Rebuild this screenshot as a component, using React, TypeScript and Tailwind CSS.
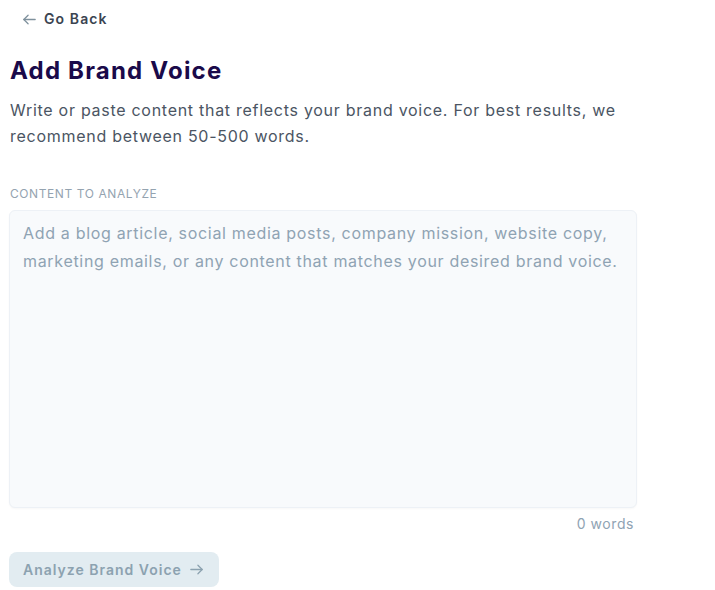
import React, {useState} from 'react';

const ArrowLeft: React.FC<{className?: string}> = ({className}) => (
  <svg viewBox="0 0 24 24" fill="none" stroke="currentColor" strokeWidth={1.8} strokeLinecap="round" strokeLinejoin="round" className={className}>
    <path d="M20 12H4" />
    <path d="M10 18l-6-6 6-6" />
  </svg>
);

const ArrowRight: React.FC<{className?: string}> = ({className}) => (
  <svg viewBox="0 0 24 24" fill="none" stroke="currentColor" strokeWidth={1.8} strokeLinecap="round" strokeLinejoin="round" className={className}>
    <path d="M4 12h16" />
    <path d="M14 6l6 6-6 6" />
  </svg>
);

const App: React.FC = () => {
  const [content, setContent] = useState('');
  const words = content.trim() ? content.trim().split(/\s+/).length : 0;

  return (
    <div className="min-h-screen bg-white font-['Inter',sans-serif] pl-[10px] pr-[77px] pt-[9px] pb-2">
      <button type="button" className="flex items-center gap-[6px] pl-[11px] text-[14px] font-semibold text-[#3b4451] leading-[20px] tracking-[1.1px]">
        <ArrowLeft className="w-[17px] h-[17px] text-[#7f919d]" />
        Go Back
      </button>

      <h1 className="mt-[26px] text-[24px] leading-[32px] font-bold text-[#1a0a4a] tracking-[1.2px]">Add Brand Voice</h1>
      <p className="mt-[10px] mr-[-40px] text-[16px] leading-[26px] text-[#4b5563] tracking-[0.72px]">
        Write or paste content that reflects your brand voice. For best results, we<br />recommend between 50-500 words.
      </p>

      <label className="block mt-[37px] text-[12px] leading-[16px] uppercase text-[#94a3b0] tracking-[0.58px]">Content to analyze</label>
      <textarea
        value={content}
        onChange={(e) => setContent(e.target.value)}
        placeholder="Add a blog article, social media posts, company mission, website copy, marketing emails, or any content that matches your desired brand voice."
        className="mt-[8px] block w-full h-[298px] -ml-px resize-none rounded-[6px] border border-[#edf1f6] bg-[#f8fafc] px-[13px] py-[8px] text-[16px] leading-[28px] tracking-[0.68px] text-[#374151] placeholder-[#8fa3b3] shadow-[0_1px_2px_rgba(0,0,0,0.03)] focus:outline-none"
      />
      <div className="mt-[6px] text-right pr-[4px] text-[14px] leading-[20px] tracking-[0.57px] text-[#8fa3b3]">{words} words</div>

      <button
        type="button"
        disabled={words === 0}
        className="mt-[18px] -ml-px flex items-center gap-[6px] rounded-[8px] bg-[#e2ecf1] px-[14px] h-[35px] text-[14px] font-semibold tracking-[1px] text-[#8ca2b0]"
      >
        Analyze Brand Voice
        <ArrowRight className="w-[17px] h-[17px]" />
      </button>
    </div>
  );
};

export default App;
